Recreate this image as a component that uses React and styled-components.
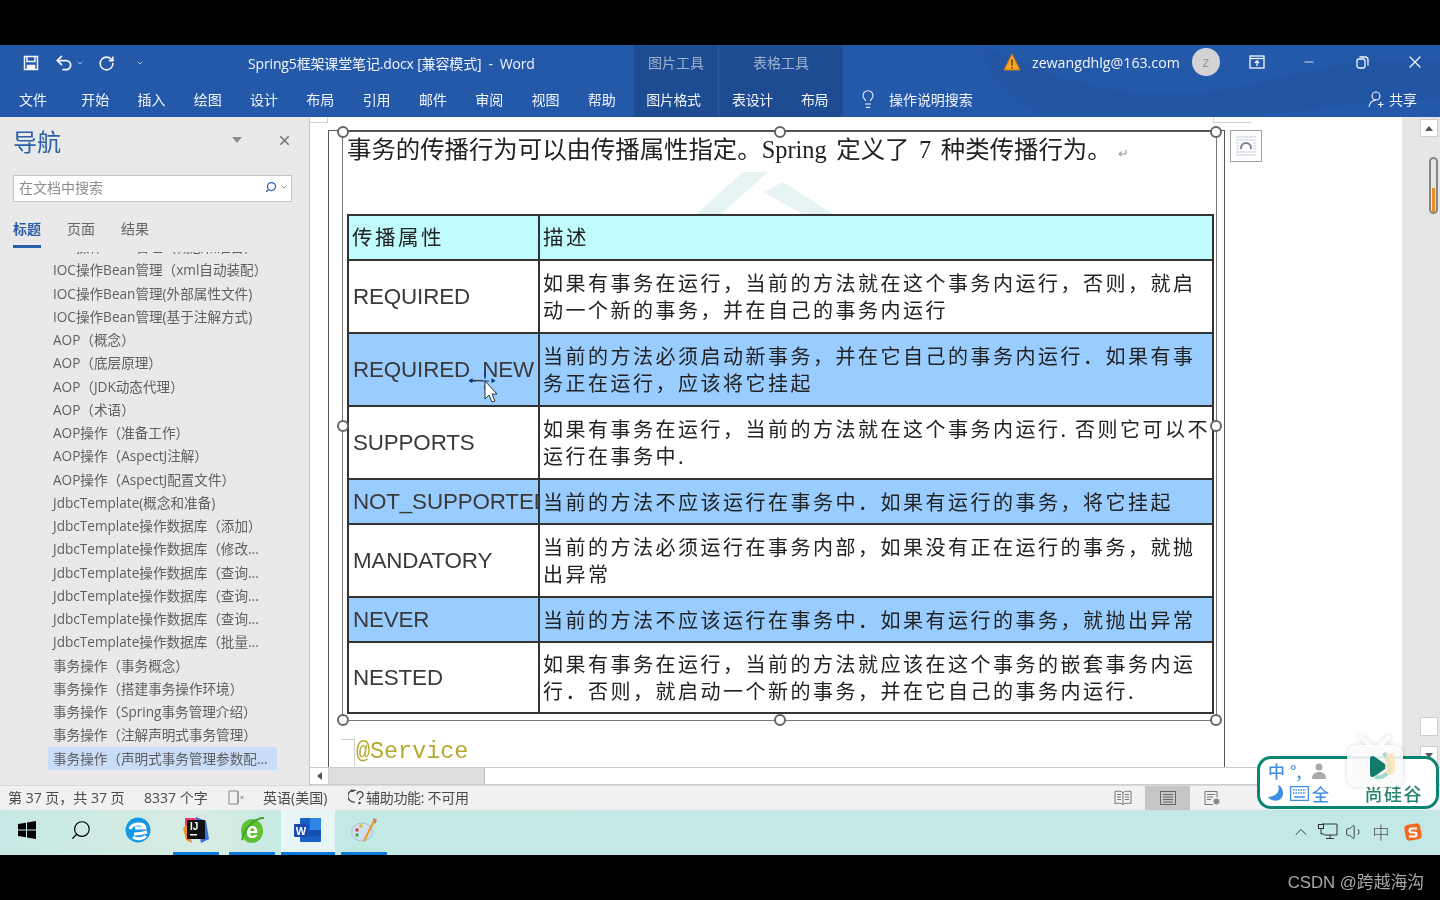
import React from 'react';
import styled, { createGlobalStyle } from 'styled-components';
import { Undo2, RotateCw, Lightbulb, X, Minus, Search, ChevronDown, ChevronUp, Volume1 } from 'lucide-react';

const SANS = '"Liberation Sans","Noto Sans CJK SC",sans-serif';
const UI = '"Open Sans","Noto Sans CJK SC",sans-serif';

const Global = createGlobalStyle`
  html, body { margin: 0; padding: 0; background: #000; overflow: hidden; }
  * { box-sizing: border-box; }
  #root { width: 1440px; height: 900px; }
`;

const Screen = styled.div`
  position: relative; width: 1440px; height: 900px; background: #000;
  display: flex; flex-direction: column; overflow: hidden; font-family: ${UI};
  filter: blur(0.35px);
`;
const Letterbox = styled.div`
  height: ${p => p.$h}px; flex: none; background: #000; display: flex; align-items: center; justify-content: flex-end;
  padding-right: 16px; padding-top: 6px;
`;
const Watermark = styled.span`color: #a9a9a9; font-size: 16.8px; font-family: ${SANS};`;

/* Title bar */
const TitleBar = styled.header`
  height: 72px; flex: none; display: flex; background: #2459a9; color: #f2f5fb; position: relative; overflow: hidden;
`;
const Waves = styled.svg`position: absolute; left: 843px; top: 0; pointer-events: none;`;
const LeftBlock = styled.div`width: 633px; flex: none; display: flex; flex-direction: column; position: relative;`;
const Row = styled.div`height: 36px; display: flex; align-items: center; position: relative;`;
const TabsRow = styled(Row)`padding-left: 5px;`;
const Qat = styled.div`display: flex; align-items: center; width: 248px; flex: none; padding-left: 23px; color: #f4f6fb;`;
const QatBtn = styled.span`display: inline-flex; align-items: center; width: ${p => p.$w}px; flex: none;`;
const DocTitle = styled.div`font-size: 14px; letter-spacing: -0.15px; white-space: nowrap;`;
const Tab = styled.span`
  width: ${p => p.$w || 56.3}px; margin-right: ${p => p.$mr || 0}px; flex: none; text-align: center; font-size: 14px; color: #f2f5fb; white-space: nowrap;
`;
const ContextGroup = styled.div`
  width: ${p => p.$w}px; flex: none; background: #1d4c92; display: flex; flex-direction: column; position: relative;
  border-left: 1px solid #2a5ba6;
`;
const ContextLabel = styled.div`height: 36px; line-height: 35px; text-align: center; font-size: 14px; color: #9fb1cd;`;
const ContextTabs = styled.div`height: 36px; display: flex; align-items: center;`;
const ContextTab = styled(Tab)`letter-spacing: -0.4px;`;
const RightBlock = styled.div`flex: 1; display: flex; flex-direction: column; position: relative;`;
const Account = styled.div`
  height: 36px; display: flex; align-items: center; padding-left: 160px; font-size: 14px; position: relative; top: -1px;
`;
const Email = styled.span`margin-left: 11px; font-size: 14.2px; white-space: nowrap; font-family: "Open Sans",sans-serif;`;
const Avatar = styled.span`
  width: 28px; height: 28px; border-radius: 50%; background: #d3d3d6; color: #8b8b8f; font-size: 11px;
  display: flex; align-items: center; justify-content: center; margin-left: 12px; flex: none;
`;
const WinBtn = styled.span`width: ${p => p.$w}px; flex: none; display: flex; justify-content: center; align-items: center;`;
const SearchHint = styled.div`height: 36px; display: flex; align-items: center; padding-left: 15px; font-size: 14px;`;
const HintText = styled.span`margin-left: 11px; letter-spacing: -0.05px;`;
const Share = styled.span`margin-left: auto; margin-right: 23px; display: flex; align-items: center; gap: 4px;`;

/* Body */
const Main = styled.main`flex: 1; display: flex; min-height: 0; background: #fff;`;
const NavPane = styled.aside`
  width: 310px; flex: none; background: #e9e9e9; display: flex; flex-direction: column; border-right: 1px solid #c8c8c8;
`;
const NavHead = styled.div`height: 48px; display: flex; align-items: center; padding: 0 17px 2px 13px; flex: none;`;
const NavTitle = styled.h2`margin: 0; font-weight: 400; font-size: 24px; color: #2b5fa8; flex: 1;`;
const Caret = styled.span`
  width: 0; height: 0; border-left: 5px solid transparent; border-right: 5px solid transparent; border-top: 6px solid #8c8c8c;
  margin-right: 35px;
`;
const SearchBox = styled.div`
  margin: 10px 17px 0 13px; height: 27px; background: #fff; border: 1px solid #c4c4c4; display: flex; align-items: center;
  padding: 0 3px 3px 5px; font-size: 14px; color: #8d8d8d; flex: none;
`;
const SearchText = styled.span`flex: 1;`;
const NavTabs = styled.div`display: flex; gap: 26px; padding-left: 13px; margin-top: 17px; flex: none; height: 31px;`;
const NavTab = styled.span`
  font-size: 14px; color: ${p => p.$on ? '#2b5fa8' : '#666'}; height: 29px; font-weight: ${p => p.$on ? 600 : 400};
  border-bottom: ${p => p.$on ? '3px solid #2b5fa8' : 'none'}; line-height: 19px;
`;
const NavListClip = styled.div`flex: 1; overflow: hidden; margin-top: 2px; padding-left: 48px;`;
const NavList = styled.ul`list-style: none; margin: -17px 0 0; padding: 0; width: 229px;`;
const NavItem = styled.li`
  height: 23.25px; line-height: 23px; padding-left: 5px; font-size: 13.6px; color: #5f5f5f; white-space: nowrap; overflow: hidden;
  background: ${p => p.$on ? '#c9dcf8' : 'transparent'};
`;

/* Document */
const DocArea = styled.section`flex: 1; display: flex; flex-direction: column; min-width: 0; background: #fff;`;
const DocRow = styled.div`flex: 1; display: flex; min-height: 0;`;
const DocScroll = styled.div`flex: 1; padding: 13px 0 0 18px; display: flex; min-width: 0; overflow: hidden; position: relative;`;
const CropMark = styled.span`
  position: absolute; top: 0; height: 6px; left: ${p => p.$x}px; width: ${p => p.$w}px; border-bottom: 1px solid #cfcfcf;
  ${p => p.$side}: 1px solid #cfcfcf;
`;
const Page = styled.div`
  width: 897px; flex: none; border: 1px solid #555; border-bottom: 0; padding: 0 0 0 13px;
`;
const Picture = styled.div`
  position: relative; width: 875px; height: 590px; border: 1.5px solid #777; border-top: 1.5px solid #555; padding: 0 0 0 4px; background: #fff;
`;
const Handle = styled.span`
  position: absolute; width: 12px; height: 12px; border-radius: 50%; background: #fff; border: 2px solid #666; z-index: 3;
  left: ${p => p.$x}%; top: ${p => p.$y}%; transform: translate(-50%, -50%);
`;
const Decor = styled.svg`position: absolute; left: 330px; top: 40px; pointer-events: none;`;
const Heading = styled.p`
  position: relative; margin: 0; height: 82px; font-family: "Liberation Serif","Noto Sans CJK SC",serif;
  font-size: 24.4px; line-height: 36px; color: #222; white-space: nowrap; word-spacing: 3.5px;
`;
const ParaMark = styled.span`color: #999; font-size: 13px; margin-left: 6px;`;
const Table = styled.table`
  position: relative; border-collapse: collapse; table-layout: fixed; width: 867px; margin-left: 0;
  border: 2px solid #333;
`;
const Tr = styled.tr`height: ${p => p.$h}px; background: ${p => p.$bg || '#fff'};`;
const KeyCell = styled.td`
  width: 191px; max-width: 191px; border: 2px solid #333; padding: 0 0 0 4px; font-family: ${SANS}; font-size: 22.4px;
  color: #3a3a3a; white-space: nowrap; overflow: hidden; letter-spacing: -0.15px;
`;
const HeadCell = styled.td`
  border: 2px solid #333; padding: 0 0 3px 3px; font-family: "Noto Sans CJK SC",sans-serif; font-size: 20.5px; color: #222;
  letter-spacing: 2.5px; ${p => p.$first ? 'width:191px;' : ''}
`;
const DescCell = styled.td`
  border: 2px solid #333; padding: 0 0 1px 3px; font-family: "Noto Sans CJK SC",sans-serif; font-size: 20px; line-height: 27px;
  color: #222; letter-spacing: 2.5px; white-space: nowrap; overflow: hidden;
`;
const Code = styled.div`
  display: flex; align-items: center; height: 60px; padding-top: 2px; font-family: "Liberation Mono",monospace; font-size: 23.4px; color: #b5a92e;
`;
const Fold = styled.span`width: 13px; height: 27px; border-top: 1px solid #ccc; border-right: 1px solid #ccc; flex: none; margin-right: 1px;`;
const LayoutBtn = styled.div`
  width: 32px; height: 32px; margin: 0 0 0 5px; border: 1px solid #a0a0a0; background: #fff; flex: none; display: flex;
  align-items: center; justify-content: center;
`;
const VScroll = styled.div`
  width: 38px; flex: none; background: #e6e6e6; display: flex; flex-direction: column; align-items: flex-end; padding: 2px 2px 2px 0;
`;
const ScrollBtn = styled.div`
  width: 18px; height: ${p => p.$h || 18}px; background: #fff; border: 1px solid #cfcfcf; flex: none; display: flex; align-items: center; justify-content: center;
  margin-top: ${p => p.$mt || 0}px;
`;
const Arrow = styled.span`
  width: 0; height: 0; border-left: 4px solid transparent; border-right: 4px solid transparent;
  ${p => p.$down ? 'border-top: 5px solid #555;' : 'border-bottom: 5px solid #555;'}
`;
const Thumb = styled.div`
  width: 9px; height: 57px; margin-top: 20px; border: 2px solid #858585; border-radius: 5px; background: #e6e6e6;
  flex: none; display: flex; flex-direction: column; justify-content: flex-end;
`;
const ThumbFill = styled.span`height: 24px; background: #f08a24; display: block; margin: 0 1px;`;
const HScroll = styled.div`height: 18px; flex: none; display: flex; background: #fff; border-top: 1px solid #ccc; border-bottom: 1px solid #ccc;`;
const HBtn = styled.div`width: 18px; display: flex; align-items: center; justify-content: center; border-right: 1px solid #ccc; flex: none; margin-left: 1px;`;
const HArrow = styled.span`width: 0; height: 0; border-top: 4px solid transparent; border-bottom: 4px solid transparent; border-right: 5px solid #555;`;
const HThumb = styled.div`width: 156px; background: #dedede; flex: none; border-right: 1px solid #bbb;`;

/* Status */
const StatusBar = styled.footer`
  height: 25px; flex: none; background: #f1f1f1; display: flex; align-items: center; font-size: 14px; color: #4a4a4a; padding: 0 0 2px 8px; border-top: 1px solid #dadada;
`;
const StatusText = styled.span`width: ${p => p.$w}px; flex: none; white-space: nowrap; display: flex; align-items: center; letter-spacing: ${p => p.$ls || 0}px;`;
const ViewBtn = styled.span`
  width: ${p => p.$w || 45}px; height: 24px; margin-bottom: -2px; flex: none; display: flex; align-items: center; justify-content: center; background: ${p => p.$on ? '#c6c6c6' : 'transparent'};
`;
const ZoomOut = styled.span`width: 205px; flex: none; display: flex; padding-left: 26px; margin-bottom: -2px;`;
const Spacer = styled.span`flex: 1;`;

/* Taskbar */
const Taskbar = styled.div`
  height: 45px; flex: none; display: flex; align-items: stretch; background: linear-gradient(90deg,#c6e8e4 0,#d8ece3 200px,#c3e9e5 300px,#c3e9e6 100%);
`;
const TaskIcon = styled.div`
  width: ${p => p.$w}px; margin-left: ${p => p.$ml || 0}px; flex: none; display: flex; align-items: center; justify-content: center; padding-bottom: 2px;
  background: ${p => p.$active ? 'rgba(255,255,255,.6)' : 'transparent'};
  border-bottom: 3px solid ${p => p.$run ? '#0a78d8' : 'transparent'};
`;
const Tray = styled.div`margin-left: auto; display: flex; align-items: center; padding-right: 8px; color: #333; padding-bottom: 2px;`;
const TraySlot = styled.span`width: ${p => p.$w}px; flex: none; display: flex; justify-content: center; align-items: center;`;
const TrayZh = styled.span`font-size: 17px; font-weight: 300; color: #555; font-family: "Noto Sans CJK SC",sans-serif;`;

/* Overlays */
const ImeBox = styled.div`
  position: absolute; left: 1257px; top: 756px; width: 182px; height: 53px; border: 3px solid #0c8570; border-radius: 14px; background: #fff;
  display: grid; grid-template-columns: 22px 22px 22px 22px 1fr; grid-template-rows: 23px 22px; padding: 0 8px; font-family: "Noto Sans CJK SC",sans-serif;
  color: #3f8fe6; font-size: 17px; line-height: 23px; font-weight: 500;
`;
const Brand = styled.span`
  grid-column: 5; grid-row: 2; justify-self: end; color: #27836f; font-size: 18px; font-weight: 500; letter-spacing: 1.5px; line-height: 22px; padding-right: 5px;
`;
const TvLogo = styled.svg`position: absolute; left: 1344px; top: 733px; filter: drop-shadow(0 0 2px rgba(0,0,0,.18));`;
const Pointer = styled.svg`position: absolute; left: 466px; top: 368px;`;

const nav = ['IOC操作Bean管理（概念和准备）','IOC操作Bean管理（xml自动装配）','IOC操作Bean管理(外部属性文件)','IOC操作Bean管理(基于注解方式)','AOP（概念）','AOP（底层原理）','AOP（JDK动态代理）','AOP（术语）','AOP操作（准备工作）','AOP操作（AspectJ注解）','AOP操作（AspectJ配置文件）','JdbcTemplate(概念和准备)','JdbcTemplate操作数据库（添加）','JdbcTemplate操作数据库（修改...','JdbcTemplate操作数据库（查询...','JdbcTemplate操作数据库（查询...','JdbcTemplate操作数据库（查询...','JdbcTemplate操作数据库（批量...','事务操作（事务概念）','事务操作（搭建事务操作环境）','事务操作（Spring事务管理介绍）','事务操作（注解声明式事务管理）','事务操作（声明式事务管理参数配...'];

const rows = [
  { k: 'REQUIRED', h: 73, lines: ['如果有事务在运行，当前的方法就在这个事务内运行，否则，就启', '动一个新的事务，并在自己的事务内运行'] },
  { k: 'REQUIRED_NEW', h: 73, bg: '#99ccff', lines: ['当前的方法必须启动新事务，并在它自己的事务内运行．如果有事', '务正在运行，应该将它挂起'] },
  { k: 'SUPPORTS', h: 73, lines: ['如果有事务在运行，当前的方法就在这个事务内运行.\u2009否则它可以不', '运行在事务中.'] },
  { k: 'NOT_SUPPORTED', h: 45, bg: '#99ccff', lines: ['当前的方法不应该运行在事务中．如果有运行的事务，将它挂起'] },
  { k: 'MANDATORY', h: 73, lines: ['当前的方法必须运行在事务内部，如果没有正在运行的事务，就抛', '出异常'] },
  { k: 'NEVER', h: 45, bg: '#99ccff', lines: ['当前的方法不应该运行在事务中．如果有运行的事务，就抛出异常'] },
  { k: 'NESTED', h: 71, lines: ['如果有事务在运行，当前的方法就应该在这个事务的嵌套事务内运', '行．否则，就启动一个新的事务，并在它自己的事务内运行.'] },
];

const handles = [[0,0],[50,0],[100,0],[0,50],[100,50],[0,100],[50,100],[100,100]];

const SaveIcon = () => (
  <svg width="16" height="16" viewBox="0 0 16 16" fill="none" stroke="#f4f6fb" strokeWidth="1.5">
    <path d="M1.5 1.5h13v13h-13z" /><path d="M4 1.5v5h8v-5" /><path d="M4.5 14.5v-4h7v4" fill="#f4f6fb" />
  </svg>
);
const RestoreIcon = () => (
  <svg width="13" height="13" viewBox="0 0 13 13" fill="none" stroke="#f4f6fb" strokeWidth="1.3">
    <rect x="1" y="3" width="8" height="9" rx="2" /><path d="M3.5 1h6a2.500 2.500 0 0 1 2.500 2.500v6" />
  </svg>
);
const RibbonIcon = () => (
  <svg width="16" height="14" viewBox="0 0 16 14" fill="none" stroke="#f4f6fb" strokeWidth="1.3">
    <rect x="1" y="1" width="14" height="12" /><path d="M1 3.500h14" /><path d="M8 11V6M5.800 8 8 5.800 10.200 8" />
  </svg>
);
const Warn = () => (
  <svg width="18" height="18" viewBox="0 0 18 18"><path d="M9 1 17 17H1z" fill="#f5a623" stroke="#c97a10" /><path d="M9 6.500v6M9 14v1.500" stroke="#5b3300" strokeWidth="1.400" /></svg>
);
const ShareIcon = () => (
  <svg width="18" height="18" viewBox="0 0 18 18" fill="none" stroke="#f4f6fb" strokeWidth="1.100">
    <circle cx="9" cy="6" r="4" /><path d="M2 17c.6-4 3-6.500 7-7" /><path d="M11 14.500h5.500M13.700 11.800v5.400" />
  </svg>
);
const ReadIcon = () => (
  <svg width="18" height="16" viewBox="0 0 18 16" fill="none" stroke="#777" strokeWidth="1">
    <path d="M9 2.500C7 1 4 1 1 1.500v12c3-.5 6-.5 8 1 2-1.500 5-1.500 8-1v-12C14 1 11 1 9 2.500zM9 2.500v12M3 4.500h4M3 7h4M3 9.500h4M11 4.500h4M11 7h4M11 9.500h4" />
  </svg>
);
const PrintIcon = () => (
  <svg width="16" height="14" viewBox="0 0 16 14" fill="none" stroke="#666" strokeWidth="1">
    <rect x=".5" y=".5" width="15" height="13" /><path d="M3 3.500h10M3 6h10M3 8.500h10M3 11h10" />
  </svg>
);
const WebIcon = () => (
  <svg width="17" height="15" viewBox="0 0 17 15" fill="none" stroke="#777" strokeWidth="1">
    <path d="M9 13.500H1V.5h12v6M3 3.500h8M3 6h6M3 8.500h4" /><circle cx="12.500" cy="10.500" r="3.500" fill="#888" stroke="#eee" />
  </svg>
);
const PageMiss = () => (
  <svg width="17" height="15" viewBox="0 0 17 15" fill="none" stroke="#888" strokeWidth="1">
    <path d="M10 1H1v13h9V1zM10 1v13" /><path d="M12.500 6l3 3M15.500 6l-3 3" />
  </svg>
);
const Access = () => (
  <svg width="18" height="18" viewBox="0 0 18 18" fill="none" stroke="#444" strokeWidth="1.200">
    <path d="M8 2.500A6 6 0 1 0 7 14" /><path d="M9 6.500a3 3 0 1 1 4 3c-1 .5-1.500 1-1.500 2.500" /><circle cx="11.500" cy="15" r=".7" fill="#444" />
    <path d="M3 1.500l1 2 2-.5" />
  </svg>
);
const LayoutGlyph = () => (
  <svg width="24" height="24" viewBox="0 0 24 24" fill="none">
    <path d="M2 3h20M2 6h20M2 18h20M2 21h20M2 9h3M19 9h3M2 12h3M19 12h3M2 15h3M19 15h3" stroke="#c5cbd8" />
    <path d="M7 15v-1a5 5 0 0 1 10 0v1" stroke="#7b8494" strokeWidth="2" />
  </svg>
);
const WinLogo = () => (
  <svg width="18" height="18" viewBox="0 0 18 18" fill="#000"><path d="M0 3l8-1.300V8.500H0zM9 1.500 18 0v8.500H9zM0 9.500h8v6.800L0 15zM9 9.500h9V18l-9-1.500z" /></svg>
);
const Edge = () => (
  <svg width="26" height="26" viewBox="0 0 26 26">
    <circle cx="13" cy="13" r="12.500" fill="#1597e8" />
    <path d="M5 12C7 6 19 5 20 11H10M22 15c-3 1-9 2-13 2M8 20c4 3 10 2 13-1" stroke="#fff" strokeWidth="3" fill="none" />
  </svg>
);
const Idea = () => (
  <svg width="28" height="28" viewBox="0 0 28 28">
    <path d="M3 2h12l2 4-14 8z" fill="#f0357e" /><path d="M14 1l10 4 3 18-8 4z" fill="#3a6fe0" /><path d="M1 12l5-4 4 19-6-3z" fill="#f58a2a" />
    <rect x="5" y="4" width="18" height="19" fill="#111" />
    <text x="8" y="14" fontFamily="Liberation Sans" fontSize="10" fontWeight="700" fill="#fff">IJ</text>
    <rect x="8" y="18" width="7" height="1.500" fill="#fff" />
  </svg>
);
const IeIcon = () => (
  <svg width="27" height="30" viewBox="0 0 27 30">
    <ellipse cx="13" cy="16" rx="11" ry="12" fill="#5ec234" />
    <text x="13" y="23" textAnchor="middle" fontFamily="Liberation Sans" fontSize="22" fontWeight="700" fill="#fff">e</text>
    <path d="M3 25C6 12 16 3 25 3" stroke="#3aa324" fill="none" strokeWidth="2" />
  </svg>
);
const WordIcon = () => (
  <svg width="28" height="26" viewBox="0 0 28 26">
    <rect x="6" y="1" width="21" height="24" rx="1" fill="#1a5fc8" /><rect x="16" y="1" width="11" height="12" fill="#2f86e6" /><rect x="6" y="13" width="21" height="6" fill="#1450ad" />
    <rect x="0" y="7" width="14" height="13" rx="1" fill="#1a49b5" />
    <text x="7" y="18" textAnchor="middle" fontFamily="Liberation Sans" fontSize="11" fontWeight="700" fill="#fff">W</text>
  </svg>
);
const Paint = () => (
  <svg width="27" height="27" viewBox="0 0 27 27">
    <ellipse cx="11" cy="15" rx="10.500" ry="9" fill="#cfe0f0" stroke="#a9bdd2" />
    <circle cx="6" cy="13" r="1.800" fill="#d9473f" /><circle cx="10" cy="9" r="1.800" fill="#e7b62e" /><circle cx="6" cy="18" r="1.800" fill="#4aa64a" />
    <path d="M24 2 13 24" stroke="#ec9a2e" strokeWidth="2.200" /><path d="M22 1l4 2-2 4z" fill="#c87a3a" />
  </svg>
);
const Monitor = () => (
  <svg width="20" height="17" viewBox="0 0 20 17" fill="none" stroke="#333"><path d="M4 1h15v11H6M12 12v3M8 15.500h8" /><rect x=".5" y="1.500" width="5" height="4" /><path d="M3 6v5h3" /></svg>
);
const Sogou = () => (
  <svg width="18" height="18" viewBox="0 0 18 18"><rect x="1" y="1" width="16" height="16" rx="4" fill="#f26a21" transform="rotate(-10 9 9)" /><path d="M13 5.500H7.500a2 2 0 0 0 0 4h3a2 2 0 0 1 0 4H5" stroke="#fff" strokeWidth="2.200" fill="none" /></svg>
);
const Moon = () => (
  <svg width="15" height="17" viewBox="0 0 15 17" style={{ alignSelf: 'center' }}><path d="M10 0c2 5 0 11-10 12 3 5 15 6 15-4 0-4-2-7-5-8z" fill="#3f8fe6" /></svg>
);
const Keyboard = () => (
  <svg width="19" height="15" viewBox="0 0 19 15" style={{ alignSelf: 'center' }} fill="none" stroke="#3f8fe6"><rect x=".5" y=".5" width="18" height="14" strokeWidth="1.500" /><path d="M3 4h13M3 7h13" strokeDasharray="1.500 1" strokeWidth="1.500" /><path d="M4 11h11" strokeWidth="1.500" /></svg>
);
const Person = () => (
  <svg width="14" height="16" viewBox="0 0 14 16" style={{ alignSelf: 'center' }} fill="#aaa"><circle cx="7" cy="4" r="3.500" /><path d="M0 16c0-5 3-7 7-7s7 2 7 7z" /></svg>
);

export default function App() {
  return (
    <Screen>
      <Global />
      <Letterbox $h={45} />
      <TitleBar>
        <Waves width="597" height="72" viewBox="0 0 597 72">
          <path d="M140 0c60 30 140 60 240 45 60-10 120-35 217-30v40c-100 0-170 20-250 17H200C170 55 140 30 140 0z" fill="#1f4f9c" fillOpacity=".35" />
        </Waves>
        <LeftBlock>
          <Row>
            <Qat>
              <QatBtn $w={31}><SaveIcon /></QatBtn>
              <QatBtn $w={22}><Undo2 size={20} strokeWidth={2.1} /></QatBtn>
              <QatBtn $w={22}><ChevronDown size={8} /></QatBtn>
              <QatBtn $w={38}><RotateCw size={17} strokeWidth={2.2} /></QatBtn>
              <QatBtn $w={12}><ChevronDown size={8} /></QatBtn>
            </Qat>
            <DocTitle>Spring5框架课堂笔记.docx [兼容模式]&nbsp; -&nbsp; Word</DocTitle>
          </Row>
          <TabsRow>
            {['文件','开始','插入','绘图','设计','布局','引用','邮件','审阅','视图','帮助'].map((t, i) => <Tab key={t} $w={i === 0 ? 56 : undefined} $mr={i === 0 ? 6 : 0}>{t}</Tab>)}
          </TabsRow>
        </LeftBlock>
        <ContextGroup $w={85}>
          <ContextLabel>图片工具</ContextLabel>
          <ContextTabs><ContextTab $w={79}>图片格式</ContextTab></ContextTabs>
        </ContextGroup>
        <ContextGroup $w={125}>
          <ContextLabel>表格工具</ContextLabel>
          <ContextTabs><ContextTab $w={67}>表设计</ContextTab><ContextTab $w={57}>布局</ContextTab></ContextTabs>
        </ContextGroup>
        <RightBlock>
          <Account>
            <Warn />
            <Email>zewangdhlg@163.com</Email>
            <Avatar>Z</Avatar>
            <WinBtn $w={74}><RibbonIcon /></WinBtn>
            <WinBtn $w={30}><Minus size={14} strokeWidth={1.4} /></WinBtn>
            <WinBtn $w={78}><RestoreIcon /></WinBtn>
            <WinBtn $w={26}><X size={20} strokeWidth={1.5} /></WinBtn>
          </Account>
          <SearchHint>
            <Lightbulb size={20} strokeWidth={1.3} />
            <HintText>操作说明搜索</HintText>
            <Share><ShareIcon />共享</Share>
          </SearchHint>
        </RightBlock>
      </TitleBar>
      <Main>
        <NavPane>
          <NavHead>
            <NavTitle>导航</NavTitle>
            <Caret />
            <X size={15} strokeWidth={2.6} color="#777" />
          </NavHead>
          <SearchBox>
            <SearchText>在文档中搜索</SearchText>
            <Search size={12} strokeWidth={2.5} color="#2b5fa8" style={{ transform: 'scaleX(-1)' }} />
            <ChevronDown size={8} color="#666" style={{ marginLeft: 3 }} />
          </SearchBox>
          <NavTabs>
            <NavTab $on>标题</NavTab>
            <NavTab>页面</NavTab>
            <NavTab>结果</NavTab>
          </NavTabs>
          <NavListClip>
            <NavList>
              {nav.map((n, i) => <NavItem key={i} $on={i === nav.length - 1}>{n}</NavItem>)}
            </NavList>
          </NavListClip>
        </NavPane>
        <DocArea>
          <DocRow>
            <DocScroll>
              <CropMark $x={0} $w={18} $side="border-right" />
              <CropMark $x={903} $w={38} $side="border-left" />
              <Page>
                <Picture>
                  <Decor width="200" height="45" viewBox="0 0 200 45">
                    <path d="M20 45 70 0h25L45 45zM110 10l55 35h-30L90 20z" fill="#e6f5f3" />
                  </Decor>
                  {handles.map(([x, y]) => <Handle key={`${x}-${y}`} $x={x} $y={y} />)}
                  <Heading>事务的传播行为可以由传播属性指定。Spring 定义了 7 种类传播行为。<ParaMark>↵</ParaMark></Heading>
                  <Table>
                    <tbody>
                      <Tr $h={45} $bg="#c0fbfd"><HeadCell $first>传播属性</HeadCell><HeadCell>描述</HeadCell></Tr>
                      {rows.map(r => (
                        <Tr key={r.k} $h={r.h} $bg={r.bg}>
                          <KeyCell>{r.k}</KeyCell>
                          <DescCell>{r.lines.map((l, i) => <div key={i}>{l}</div>)}</DescCell>
                        </Tr>
                      ))}
                    </tbody>
                  </Table>
                </Picture>
                <Code><Fold />@Service</Code>
              </Page>
              <LayoutBtn><LayoutGlyph /></LayoutBtn>
            </DocScroll>
            <VScroll>
              <ScrollBtn $h={18}><Arrow /></ScrollBtn>
              <Thumb><ThumbFill /></Thumb>
              <ScrollBtn $h={19} $mt={503} />
              <ScrollBtn $h={18} $mt={10}><Arrow $down /></ScrollBtn>
            </VScroll>
          </DocRow>
          <HScroll>
            <HBtn><HArrow /></HBtn>
            <HThumb />
          </HScroll>
        </DocArea>
      </Main>
      <StatusBar>
        <StatusText $w={136}>第 37 页，共 37 页</StatusText>
        <StatusText $w={84}>8337 个字</StatusText>
        <StatusText $w={35}><PageMiss /></StatusText>
        <StatusText $w={85}>英语(美国)</StatusText>
        <StatusText $w={18}><Access /></StatusText>
        <StatusText $w={130} $ls={-0.3}>辅助功能: 不可用</StatusText>
        <Spacer />
        <ViewBtn><ReadIcon /></ViewBtn>
        <ViewBtn $on><PrintIcon /></ViewBtn>
        <ViewBtn><WebIcon /></ViewBtn>
        <ZoomOut><Minus size={12} color="#444" /></ZoomOut>
      </StatusBar>
      <Taskbar>
        <TaskIcon $w={54}><WinLogo /></TaskIcon>
        <TaskIcon $w={54}><Search size={22} strokeWidth={1.3} style={{ transform: 'scaleX(-1)' }} /></TaskIcon>
        <TaskIcon $w={60}><Edge /></TaskIcon>
        <TaskIcon $w={46} $ml={5} $run><Idea /></TaskIcon>
        <TaskIcon $w={46} $ml={10} $run><IeIcon /></TaskIcon>
        <TaskIcon $w={54} $ml={6} $run $active><WordIcon /></TaskIcon>
        <TaskIcon $w={46} $ml={6} $run><Paint /></TaskIcon>
        <Tray>
          <TraySlot $w={27}><ChevronUp size={20} strokeWidth={1.2} /></TraySlot>
          <TraySlot $w={27}><Monitor /></TraySlot>
          <TraySlot $w={27}><Volume1 size={20} strokeWidth={1.1} /></TraySlot>
          <TraySlot $w={26}><TrayZh>中</TrayZh></TraySlot>
          <TraySlot $w={38}><Sogou /></TraySlot>
        </Tray>
      </Taskbar>
      <Letterbox $h={45}><Watermark>CSDN @跨越海沟</Watermark></Letterbox>
      <ImeBox>
        <span>中</span><span>°,</span><Person /><span /><span />
        <Moon /><Keyboard /><span>全</span><span /><Brand>尚硅谷</Brand>
      </ImeBox>
      <Pointer width="34" height="36" viewBox="0 0 34 36">
        <path d="M3 13h26M3 13l3-2v4zM29 13l-3-2v4zM19 4v18" stroke="#123a7a" strokeWidth="1.200" fill="#123a7a" strokeDasharray="7 6" />
        <path d="M19 13v18l4-4 3 7 3-1-3-7h5z" fill="#fff" stroke="#333" strokeWidth="1" />
      </Pointer>
      <TvLogo width="64" height="58" viewBox="0 0 64 58">
        <path d="M16 3l11 10M46 3 36 13" stroke="#fff" strokeWidth="5" opacity=".85" />
        <rect x="3" y="12" width="56" height="42" rx="9" fill="#fff" fillOpacity=".88" />
        <path d="M26 26c0-3 2-4 5-2l10 7c2 2 2 3 0 5l-10 7c-3 2-5 1-5-2z" fill="#117a68" />
        <path d="M40 20c4 6 6 10 6 14s-6 12-15 10" stroke="#9fd6cd" strokeWidth="4" fill="none" />
        <rect x="41" y="20" width="10" height="22" rx="5" fill="#fde6b9" opacity=".8" />
      </TvLogo>
    </Screen>
  );
}
